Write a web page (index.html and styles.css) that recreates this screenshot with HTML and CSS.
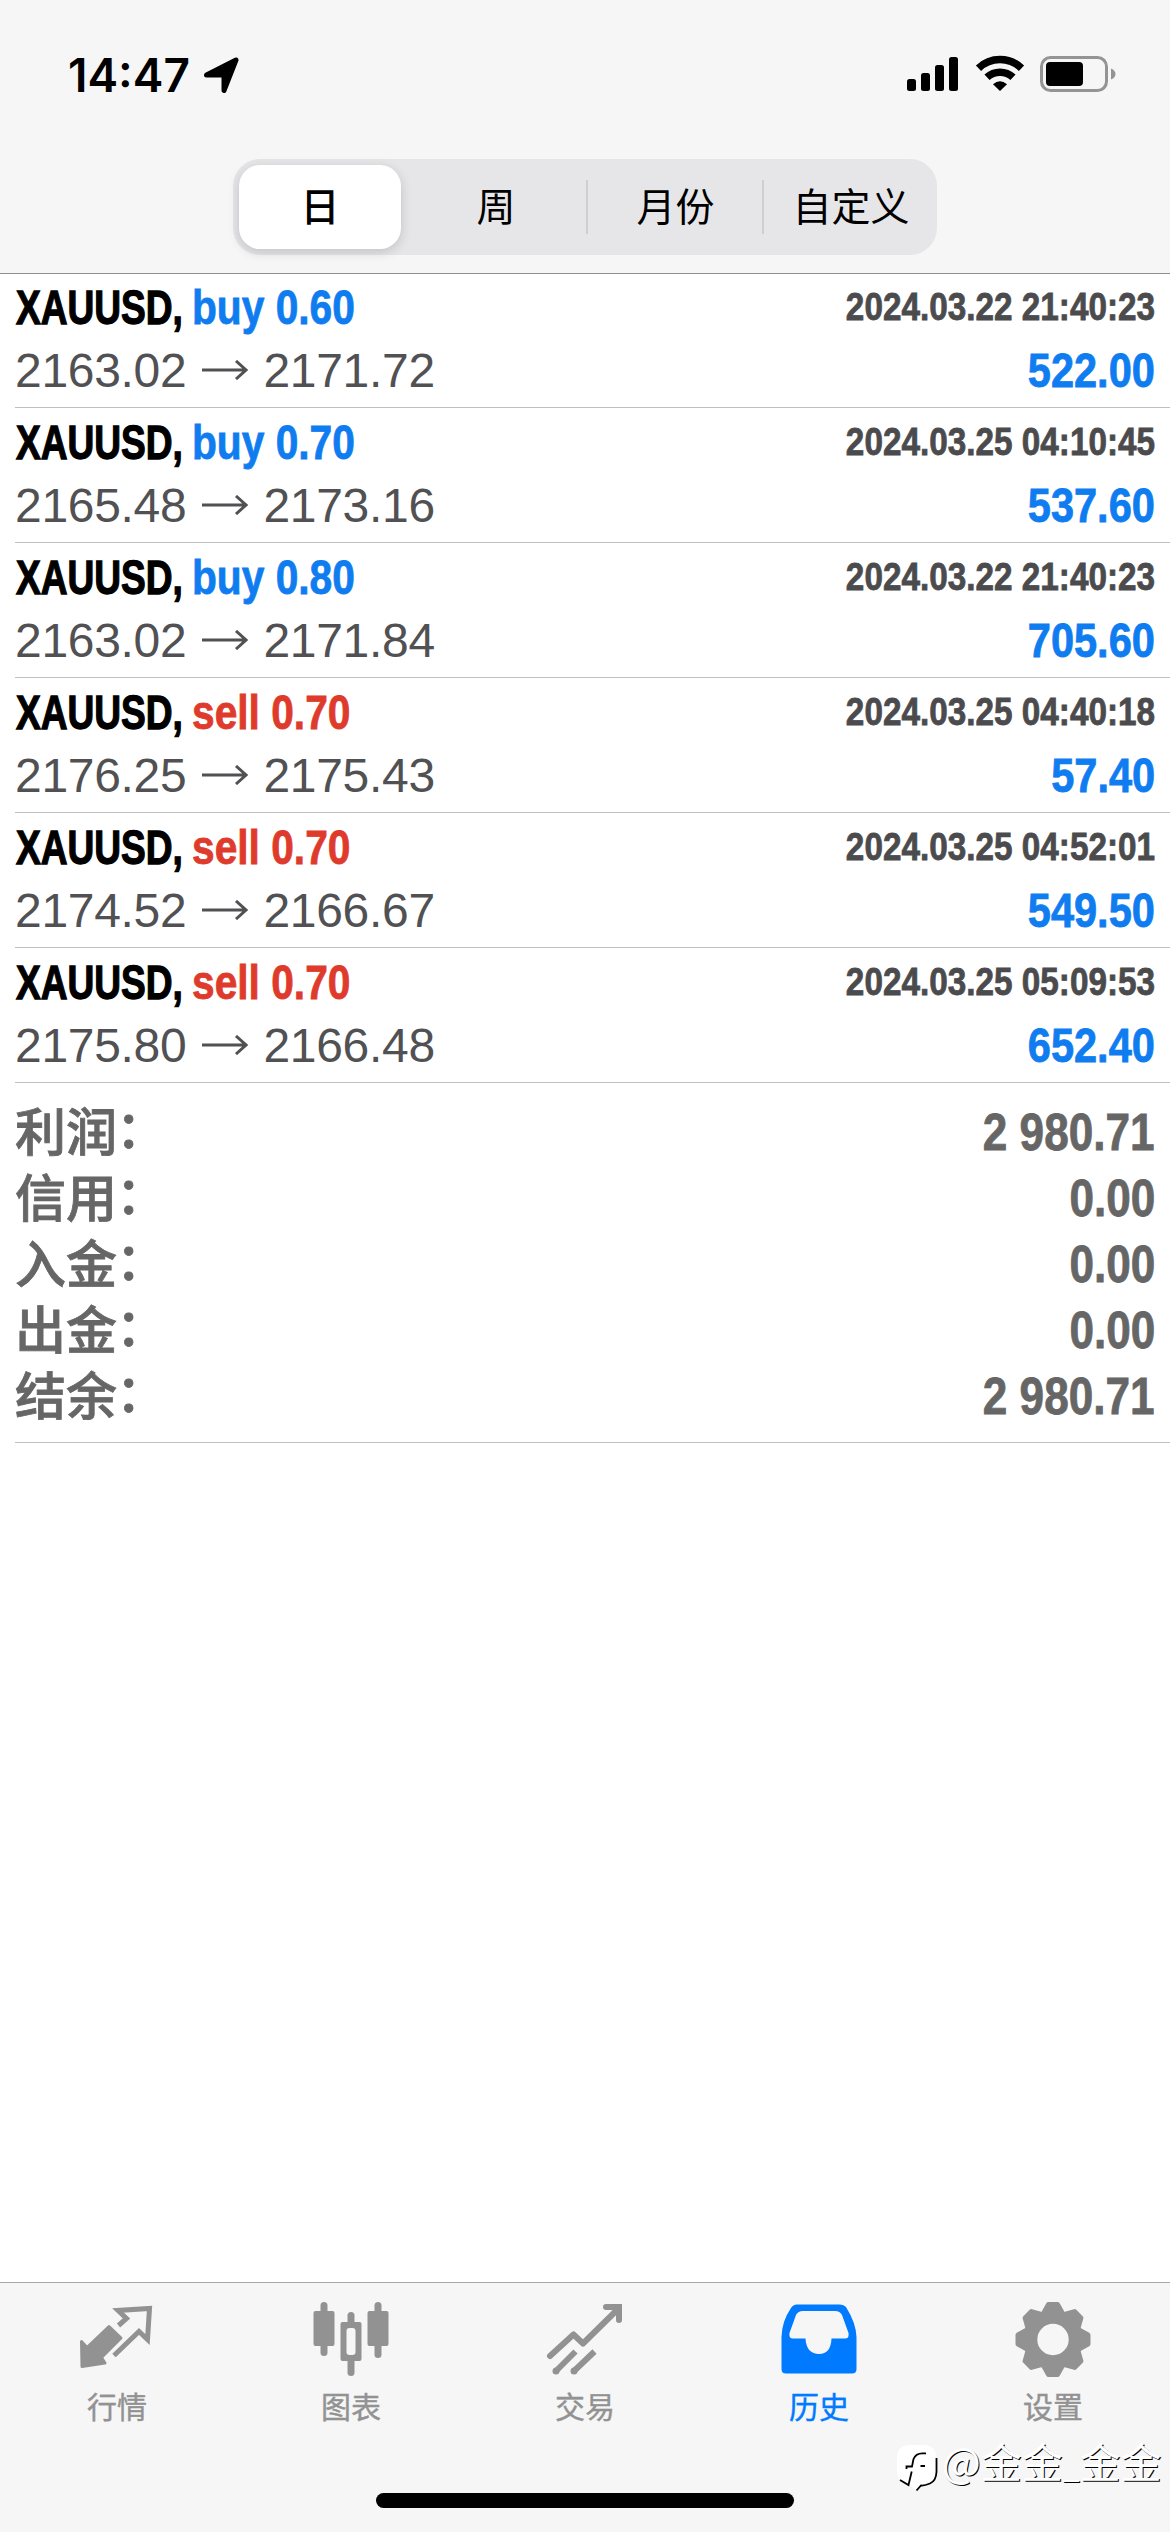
FILE: index.html
```html
<!DOCTYPE html>
<html lang="zh-CN">
<head>
<meta charset="utf-8">
<title>历史</title>
<link rel="stylesheet" href="styles.css">
</head>
<body>
<div class="screen">
  <header class="top">
    <div class="status">
      <div class="status-left">
        <span class="time">14:47</span>
        <svg class="loc" width="36" height="36" viewBox="0 0 36 36"><path d="M33 3 21 33.500V18H3.500Z" stroke="#000" stroke-width="5" stroke-linejoin="round"/></svg>
      </div>
      <div class="status-right">
        <svg class="signal" width="51" height="34" viewBox="0 0 51 34"><rect y="22" width="9" height="12" rx="2.500"/><rect x="14" y="16" width="9" height="18" rx="2.500"/><rect x="28" y="8" width="9" height="26" rx="2.500"/><rect x="42" width="9" height="34" rx="2.500"/></svg>
        <svg class="wifi" width="50" height="36" viewBox="0 0 50 36"><g fill="none" stroke="#000" stroke-width="7.500"><path d="M3.500 13.200A31 31 0 0 1 46.500 13.200"/><path d="M12 22.300A19 19 0 0 1 38 22.300"/></g><path d="M25 36 18 29.300Q25 23 32 29.300Z"/></svg>
        <svg class="battery" width="76" height="36" viewBox="0 0 76 36"><rect x="1.500" y="1.500" width="65" height="33" rx="9" fill="none" stroke="#949494" stroke-width="3"/><rect x="6" y="6" width="37" height="24" rx="4"/><path d="M71 12.500q4.500 2 4.500 5.500t-4.500 5.500z" fill="#949494"/></svg>
      </div>
    </div>
    <nav class="segments">
      <span class="seg active">日</span><span class="seg near">周</span><span class="seg ruled">月份</span><span class="seg ruled last">自定义</span>
    </nav>
  </header>
  <main class="history">
    <article class="deal"><div class="line"><span class="title"><b class="name">XAUUSD,</b><b class="side buy">buy 0.60</b></span><time class="date">2024.03.22 21:40:23</time></div><div class="line"><span class="price">2163.02<svg class="arrow" viewBox="0 0 46 20"><path d="M0 10H44M34 1 44 10 34 19"/></svg>2171.72</span><span class="profit">522.00</span></div></article>
    <article class="deal"><div class="line"><span class="title"><b class="name">XAUUSD,</b><b class="side buy">buy 0.70</b></span><time class="date">2024.03.25 04:10:45</time></div><div class="line"><span class="price">2165.48<svg class="arrow" viewBox="0 0 46 20"><path d="M0 10H44M34 1 44 10 34 19"/></svg>2173.16</span><span class="profit">537.60</span></div></article>
    <article class="deal"><div class="line"><span class="title"><b class="name">XAUUSD,</b><b class="side buy">buy 0.80</b></span><time class="date">2024.03.22 21:40:23</time></div><div class="line"><span class="price">2163.02<svg class="arrow" viewBox="0 0 46 20"><path d="M0 10H44M34 1 44 10 34 19"/></svg>2171.84</span><span class="profit">705.60</span></div></article>
    <article class="deal"><div class="line"><span class="title"><b class="name">XAUUSD,</b><b class="side sell">sell 0.70</b></span><time class="date">2024.03.25 04:40:18</time></div><div class="line"><span class="price">2176.25<svg class="arrow" viewBox="0 0 46 20"><path d="M0 10H44M34 1 44 10 34 19"/></svg>2175.43</span><span class="profit">57.40</span></div></article>
    <article class="deal"><div class="line"><span class="title"><b class="name">XAUUSD,</b><b class="side sell">sell 0.70</b></span><time class="date">2024.03.25 04:52:01</time></div><div class="line"><span class="price">2174.52<svg class="arrow" viewBox="0 0 46 20"><path d="M0 10H44M34 1 44 10 34 19"/></svg>2166.67</span><span class="profit">549.50</span></div></article>
    <article class="deal"><div class="line"><span class="title"><b class="name">XAUUSD,</b><b class="side sell">sell 0.70</b></span><time class="date">2024.03.25 05:09:53</time></div><div class="line"><span class="price">2175.80<svg class="arrow" viewBox="0 0 46 20"><path d="M0 10H44M34 1 44 10 34 19"/></svg>2166.48</span><span class="profit">652.40</span></div></article>
    <section class="summary">
      <div class="total"><span class="label">利润<i class="colon">：</i></span><span class="amount">2 980.71</span></div>
      <div class="total"><span class="label">信用<i class="colon">：</i></span><span class="amount">0.00</span></div>
      <div class="total"><span class="label">入金<i class="colon">：</i></span><span class="amount">0.00</span></div>
      <div class="total"><span class="label">出金<i class="colon">：</i></span><span class="amount">0.00</span></div>
      <div class="total"><span class="label">结余<i class="colon">：</i></span><span class="amount">2 980.71</span></div>
    </section>
  </main>
  <footer class="bottom">
    <nav class="tabs">
      <span class="tab"><svg class="icon" viewBox="0 0 78 78"><g fill="#929292" stroke="#929292" stroke-linejoin="round"><path stroke-width="3" d="M3.500 36.500 9 42.500 31 21.500 43 33 23.500 52.500 27 58 4 61.500Z"/><path d="M40.500 20.500 48.500 13.500 40 5.500 71.500 3.500 69.500 34.500 61 26.500 36 50.500" fill="none" stroke-width="5" stroke-linejoin="miter"/></g></svg>行情</span>
      <span class="tab"><svg class="icon" viewBox="0 0 78 78"><g fill="#929292"><rect x="1.500" y="6" width="21" height="35" rx="2"/><rect x="8.500" y="-3" width="7" height="54" rx="3.500"/><rect x="55.500" y="6" width="21" height="35" rx="2"/><rect x="62.500" y="-3" width="7" height="56" rx="3.500"/><rect x="35.500" y="7" width="7" height="14" rx="3.500"/><rect x="35.500" y="52" width="7" height="19" rx="3.500"/><path fill-rule="evenodd" d="M30.500 17h17a2 2 0 0 1 2 2v35a2 2 0 0 1-2 2h-17a2 2 0 0 1-2-2V19a2 2 0 0 1 2-2Zm7 6a3 3 0 0 0-3 3v21a3 3 0 0 0 3 3h3a3 3 0 0 0 3-3V26a3 3 0 0 0-3-3Z"/></g></svg>图表</span>
      <span class="tab"><svg class="icon" viewBox="0 0 78 78"><g fill="none" stroke="#929292" stroke-width="6" stroke-linecap="round" stroke-linejoin="round"><path d="M4 51 27.500 29.500 37 38.500 72 4"/><path d="M60 2H73V15" stroke-linejoin="miter"/></g><g fill="none" stroke="#929292" stroke-width="6"><path d="M9 67 29.500 46.500M27 67 48.500 46.500"/></g><g fill="#929292"><circle cx="10" cy="66" r="3.500"/><circle cx="28" cy="66" r="3.500"/></g></svg>交易</span>
      <span class="tab current"><svg class="icon" viewBox="0 0 78 78"><path fill="#007aff" fill-rule="evenodd" d="M17-.5H60Q64-.5 66 2 76 18 76.500 32V64Q76.500 68.500 72 68.500H6Q1.500 68.500 1.500 64V32Q2 16 11 3 13-.5 17-.5ZM23 6Q18 6 16 10L9.500 28Q8.500 33.500 13 33.500H25.500C26 44 31 49 39 49S51 44 51.500 33.500H65Q69.500 33.500 68.500 28L62 10Q60 6 55 6Z"/></svg>历史</span>
      <span class="tab"><svg class="icon" viewBox="-39 -34.500 78 78"><path fill="#929292" stroke="#929292" stroke-width="5" stroke-linejoin="round" fill-rule="evenodd" d="M-4.500-35H4.500L9.500-26 11.700-25.100 21.600-27.900 27.900-21.600 25.100-11.700 26-9.500 35-4.500V4.500L26 9.500 25.100 11.700 27.900 21.600 21.600 27.900 11.700 25.100 9.500 26 4.500 35H-4.500L-9.500 26-11.700 25.100-21.600 27.900-27.900 21.600-25.100 11.700-26 9.500-35 4.500V-4.500L-26-9.500-25.100-11.700-27.900-21.600-21.600-27.900-11.700-25.100-9.500-26ZM0-18.200A18.200 18.200 0 1 0 0 18.200 18.200 18.200 0 1 0 0-18.200Z"/></svg>设置</span>
    </nav>
    <div class="home"></div>
    <div class="mark"><svg class="mark-icon" width="42" height="48" viewBox="0 0 42 48"><path d="M12 0H28Q39 1 39 13V26Q39 38 25 39L19 45 11 39Q0 36 0 26V12Q0 1 12 0Z" fill="#fff"/><g fill="none" stroke="#000" stroke-width="1.800"><path d="M29 8.300H26Q19 8 16.500 14L15 21.500H9.500V24M23.500 21H28M14.700 26.500 11.500 40 3 35M39.500 13V27Q39 36 33 38.500T24 40.500L19.500 45.500"/></g></svg><span>@金金<i class="under">_</i>金金</span></div>
  </footer>
</div>
</body>
</html>
```
FILE: styles.css
```css
* { box-sizing: border-box; }
body { margin: 0; background: #fff; }
.screen { width: 1170px; height: 2532px; display: flex; flex-direction: column; font-family: "Liberation Sans", "Noto Sans CJK SC", sans-serif; overflow: hidden; }
.top { height: 274px; background: #f6f6f6; border-bottom: 1px solid #8e8e8e; flex: none; }
.status { height: 159px; padding: 55px 54px 0 68px; display: flex; justify-content: space-between; align-items: flex-start; }
.status-left, .status-right { display: flex; align-items: flex-start; }
.time { font: 600 46px/40px Inter, sans-serif; width: 135px; }
.loc { margin-top: 2px; }
.signal { margin: 2px 17px 0 0; }
.wifi { margin-right: 15px; }
.battery { margin-top: 1px; }
.segments { width: 704px; height: 96px; margin: 0 auto; padding: 6px 0 6px 6px; border-radius: 27px; background: #e6e6e8; display: grid; grid-template-columns: 162px 185px 176px 1fr; font: 39px/78px "Noto Sans CJK SC", sans-serif; text-align: center; }
.seg { height: 84px; color: #000; }
.seg.near { padding-left: 5px; }
.seg.ruled { padding-left: 3px; background: linear-gradient(#cfcfd2, #cfcfd2) left center / 2px 54px no-repeat; }
.seg.active { background: #fff; border-radius: 21px; box-shadow: 0 3px 12px rgba(0,0,0,.16); font-weight: 500; }
.history { flex: 1; }
.deal { height: 135px; margin-left: 15px; padding: 3px 15px 0 1px; border-bottom: 1px solid #c0c0c2; }
.deal:first-child { height: 134px; padding-top: 2px; }
.line { height: 63px; display: flex; justify-content: space-between; align-items: baseline; line-height: 63px; }
.title { display: flex; }
/* condensed bold face: regular-width bold squeezed horizontally */
.name, .side, .date, .profit, .amount { font-weight: 700; white-space: pre; -webkit-text-stroke: .800px currentColor; }
.name, .side { display: block; font-size: 48px; transform-origin: left center; }
.name { width: 176px; transform: scaleX(.772); color: #000; -webkit-text-stroke-width: 1.300px; }
.side { width: 162px; transform: scaleX(.848); }
.buy, .profit { color: #0f7cf0; }
.sell { color: #df3b2c; }
.date, .profit, .amount { transform-origin: right center; }
.date { font-size: 39px; color: #4b4b4e; position: relative; top: -4px; transform: scaleX(.854); }
.price { font-size: 48px; color: #515154; letter-spacing: -.300px; margin-left: -1px; }
.arrow { width: 46px; height: 20px; margin: 0 15px 7px 16px; fill: none; stroke: #515154; stroke-width: 3; }
.profit { font-size: 48px; transform: scaleX(.865); }
.summary { margin-left: 15px; padding: 16px 15px 0 1px; height: 360px; border-bottom: 1px solid #c0c0c2; }
.total { height: 66px; display: flex; justify-content: space-between; color: #666; }
.label { font: 500 51px/60px "Noto Sans CJK SC", sans-serif; margin-left: -1px; -webkit-text-stroke: .800px currentColor; }
.colon { font-style: normal; position: relative; top: -3px; left: -1px; }
.amount { font-size: 51px; line-height: 67px; transform: scaleX(.865); }
.bottom { position: relative; height: 250px; flex: none; background: #f6f6f6; border-top: 1px solid #a8a8aa; }
.tabs { display: flex; height: 210px; padding-top: 22px; }
.tab { flex: 1; display: flex; flex-direction: column; align-items: center; font: 30px/44px "Noto Sans CJK SC", sans-serif; color: #929292; -webkit-text-stroke: .400px currentColor; }
.tab.current { color: #007aff; }
.icon { width: 78px; height: 78px; overflow: visible; }
.home { width: 418px; height: 15px; margin: 0 auto; border-radius: 8px; background: #000; }
.mark { position: absolute; left: 897px; top: 149px; display: flex; gap: 3px; color: #fff; font: 41px/56px "Noto Sans CJK SC", sans-serif; text-shadow: 1px 1px 0 #000; white-space: nowrap; }
.mark-icon { margin-top: 13px; }
.under { font-size: 30px; font-style: normal; }
```
